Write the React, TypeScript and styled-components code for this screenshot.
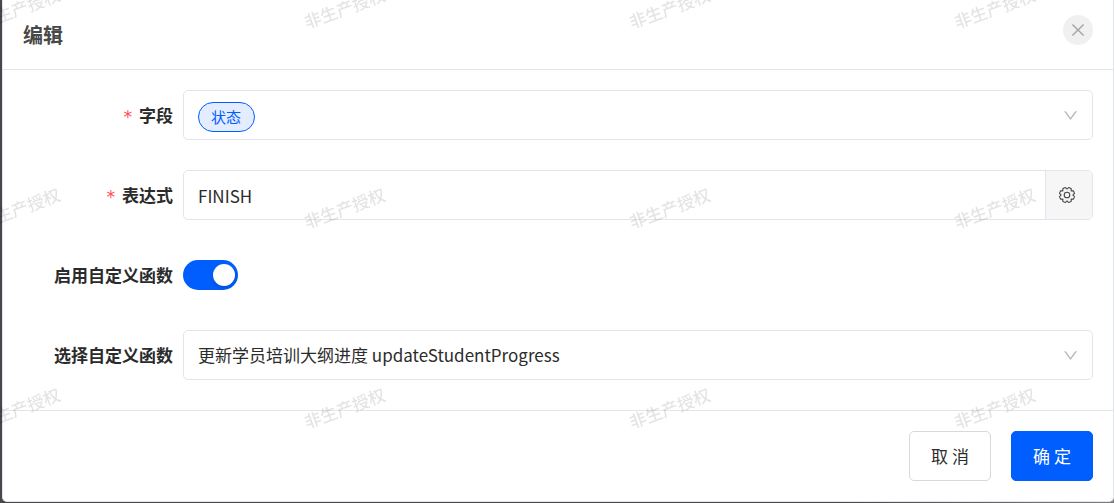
import React from "react";
import styled, { createGlobalStyle, css } from "styled-components";
import { AiOutlineClose, AiOutlineDown } from "react-icons/ai";

const colors = {
  primary: "#005eff",
  line: "#e2e5ee",
  text: "#2b2b2b",
  required: "#ff4d4f",
};

const GlobalStyle = createGlobalStyle`
  *, *::before, *::after { box-sizing: border-box; }
  body {
    margin: 0;
    background: linear-gradient(to right, #48474a 75%, #7d7d7f);
    color: ${colors.text};
    font-family: "Noto Sans CJK SC", "Noto Sans", sans-serif;
    font-size: 17px;
    line-height: 24px;
  }
  button, input, select { font: inherit; color: inherit; margin: 0; }
`;

const Page = styled.div`
  padding: 0 0 1px 2px;
  overflow: hidden;
`;

const Dialog = styled.section`
  background: #fff;
  border: 1px solid ${colors.line};
  border-top: 0;
  border-radius: 0 0 5px 5px;
`;

const Header = styled.header`
  display: flex;
  justify-content: space-between;
  align-items: flex-start;
  padding: 15px 20px 24px;
  border-bottom: 1px solid ${colors.line};
`;

const Title = styled.h1`
  margin: 0;
  padding-top: 5px;
  font-size: 20px;
  line-height: 30px;
  height: 30px;
  font-weight: 700;
  color: #484848;
`;

const CloseButton = styled.button`
  display: flex;
  align-items: center;
  justify-content: center;
  width: 30px;
  height: 30px;
  padding: 0;
  border: 0;
  border-radius: 50%;
  background: #f0f0f0;
  color: #a6a6a6;
  font-size: 18px;
`;

const Form = styled.form`
  margin: 0;
`;

const Fields = styled.div`
  display: flex;
  flex-direction: column;
  gap: 30px;
  padding: 20px 20px 30px 0;
`;

const Row = styled.div`
  display: grid;
  grid-template-columns: 170px 1fr;
  column-gap: 10px;
  align-items: center;
  min-height: 50px;
`;

const Label = styled.label`
  display: flex;
  justify-content: flex-end;
  align-items: center;
  gap: 6px;
  font-weight: 700;
  white-space: nowrap;
`;

const Required = styled.span`
  padding-top: 4px;
  color: ${colors.required};
  font-family: "DejaVu Sans Mono", monospace;
  font-weight: 400;
`;

const box = css`
  height: 50px;
  border: 1px solid ${colors.line};
  border-radius: 5px;
  background: #fff;
`;

const TagBox = styled.div`
  ${box}
  display: flex;
  justify-content: space-between;
  align-items: flex-start;
  padding: 11px 13px 11px 14px;
`;

const TagSelect = styled.select`
  appearance: none;
  height: 30px;
  padding: 0 12px;
  border: 1px solid ${colors.primary};
  border-radius: 15px;
  background: #e3edff;
  color: ${colors.primary};
  font-size: 15px;
`;

const SelectBox = styled.div`
  ${box}
  display: grid;
  align-items: center;

  > * { grid-area: 1 / 1; }
  > svg { justify-self: end; margin-right: 13px; }
`;

const Select = styled.select`
  appearance: none;
  width: 100%;
  height: 48px;
  padding: 0 40px 0 14px;
  border: 0;
  border-radius: 5px;
  background: transparent;
`;

const Arrow = styled(AiOutlineDown)`
  align-self: center;
  color: #b8b8b8;
  font-size: 17px;
  pointer-events: none;
`;

const InputGroup = styled.div`
  ${box}
  display: flex;
  overflow: hidden;
`;

const TextInput = styled.input`
  flex: 1;
  min-width: 0;
  padding: 2px 14px 0;
  border: 0;
  background: transparent;
`;

const Addon = styled.button`
  display: flex;
  align-items: center;
  justify-content: center;
  width: 47px;
  padding: 0 4px 0 0;
  border: 0;
  border-left: 1px solid ${colors.line};
  background: #f6f6f6;
`;

const Switch = styled.input`
  appearance: none;
  display: flex;
  align-items: center;
  width: 55px;
  height: 30px;
  padding: 0 3px;
  border-radius: 15px;
  background: #bfbfbf;

  &::before {
    content: "";
    width: 22px;
    height: 22px;
    border-radius: 50%;
    background: #fff;
    box-shadow: 0 2px 4px rgba(0, 35, 11, 0.2);
  }
  &:checked { background: ${colors.primary}; justify-content: flex-end; }
`;

const Footer = styled.footer`
  display: flex;
  justify-content: flex-end;
  gap: 20px;
  padding: 20px;
  border-top: 1px solid ${colors.line};
`;

const Button = styled.button<{ $primary?: boolean }>`
  width: 82px;
  height: 50px;
  padding: 0;
  border: 1px solid ${(p) => (p.$primary ? colors.primary : "#d9d9d9")};
  border-radius: 5px;
  background: ${(p) => (p.$primary ? colors.primary : "#fff")};
  color: ${(p) => (p.$primary ? "#fff" : colors.text)};
`;

const WatermarkLayer = styled.div`
  position: fixed;
  inset: 0;
  overflow: hidden;
  pointer-events: none;
`;

const WatermarkGrid = styled.div`
  display: grid;
  grid-template-columns: repeat(4, 325px);
  grid-auto-rows: 200px;
  margin: -92px 0 0 -143px;
`;

const Watermark = styled.span`
  place-self: center;
  transform: rotate(-20deg);
  color: rgba(0, 0, 0, 0.11);
  font-weight: 500;
  white-space: nowrap;
`;

// Closed outline of a cog: eight broad teeth parted by narrow notches, one of them at the top.
const gearOutline =
  Array.from({ length: 96 }, (_, i) => {
    const angle = (i / 96) * Math.PI * 2;
    const notch = Math.max(0, Math.cos(8 * angle));
    const radius = 7.6 - 1.6 * notch;
    const x = 9 + radius * Math.cos(angle);
    const y = 9 + radius * Math.sin(angle);
    return `${i === 0 ? "M" : "L"}${x.toFixed(2)} ${y.toFixed(2)}`;
  }).join("") + "Z";

function GearIcon() {
  return (
    <svg width="18" height="18" viewBox="0 0 18 18" fill="none" stroke="#444" strokeWidth="1.1" aria-hidden="true">
      <path d={gearOutline} />
      <circle cx="9" cy="9" r="2.8" />
    </svg>
  );
}

export default function App() {
  return (
    <Page>
      <GlobalStyle />
      <Dialog role="dialog" aria-labelledby="dialog-title">
        <Header>
          <Title id="dialog-title">编辑</Title>
          <CloseButton type="button" aria-label="关闭">
            <AiOutlineClose />
          </CloseButton>
        </Header>
        <Form onSubmit={(e) => e.preventDefault()}>
          <Fields>
            <Row>
              <Label htmlFor="field">
                <Required>*</Required>字段
              </Label>
              <TagBox>
                <TagSelect id="field" defaultValue="status">
                  <option value="status">状态</option>
                </TagSelect>
                <Arrow />
              </TagBox>
            </Row>
            <Row>
              <Label htmlFor="expression">
                <Required>*</Required>表达式
              </Label>
              <InputGroup>
                <TextInput id="expression" type="text" defaultValue="FINISH" />
                <Addon type="button" aria-label="设置">
                  <GearIcon />
                </Addon>
              </InputGroup>
            </Row>
            <Row>
              <Label htmlFor="custom-enabled">启用自定义函数</Label>
              <Switch id="custom-enabled" type="checkbox" role="switch" defaultChecked />
            </Row>
            <Row>
              <Label htmlFor="custom-function">选择自定义函数</Label>
              <SelectBox>
                <Select id="custom-function" defaultValue="progress">
                  <option value="progress">更新学员培训大纲进度 updateStudentProgress</option>
                </Select>
                <Arrow />
              </SelectBox>
            </Row>
          </Fields>
          <Footer>
            <Button type="button">取 消</Button>
            <Button type="submit" $primary>确 定</Button>
          </Footer>
        </Form>
      </Dialog>
      <WatermarkLayer aria-hidden="true">
        <WatermarkGrid>
          {Array.from({ length: 12 }, (_, i) => (
            <Watermark key={i}>非生产授权</Watermark>
          ))}
        </WatermarkGrid>
      </WatermarkLayer>
    </Page>
  );
}
